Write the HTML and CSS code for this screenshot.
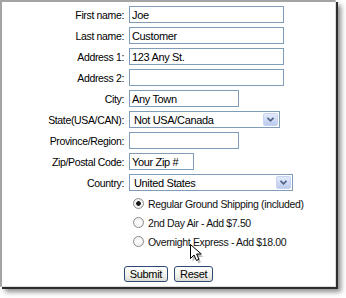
FILE: index.html
```html
<html>
<head>
  <meta charset="UTF-8">
  <title>Shipping Address</title>
  <link rel="stylesheet" href="styles.css">
</head>
<body>
  <form class="panel">
    <div class="fields">
      <label for="first">First name:</label>
      <input id="first" class="w-long" type="text" value="Joe">

      <label for="last">Last name:</label>
      <input id="last" class="w-long" type="text" value="Customer">

      <label for="addr1">Address 1:</label>
      <input id="addr1" class="w-long" type="text" value="123 Any St.">

      <label for="addr2">Address 2:</label>
      <input id="addr2" class="w-long" type="text" value="">

      <label for="city">City:</label>
      <input id="city" class="w-mid" type="text" value="Any Town">

      <label for="state">State(USA/CAN):</label>
      <span class="select w-state">
        <select id="state"><option>Not USA/Canada</option></select>
        <span class="drop"><svg width="7" height="5" viewBox="0 0 7 5"><path d="M0.5 0.8 L3.5 3.8 L6.5 0.8" fill="none" stroke="#4d6185" stroke-width="1.6"/></svg></span>
      </span>

      <label for="region">Province/Region:</label>
      <input id="region" class="w-mid" type="text" value="">

      <label for="zip">Zip/Postal Code:</label>
      <input id="zip" class="w-short" type="text" value="Your Zip #">

      <label for="country">Country:</label>
      <span class="select w-country">
        <select id="country"><option>United States</option></select>
        <span class="drop"><svg width="7" height="5" viewBox="0 0 7 5"><path d="M0.5 0.8 L3.5 3.8 L6.5 0.8" fill="none" stroke="#4d6185" stroke-width="1.6"/></svg></span>
      </span>

      <div class="shipping">
        <label class="radio"><input type="radio" name="ship" checked> Regular Ground Shipping (included)</label>
        <label class="radio"><input type="radio" name="ship"> 2nd Day Air - Add $7.50</label>
        <label class="radio"><input type="radio" name="ship"> Overnight Express - Add $18.00</label>
      </div>
    </div>

    <div class="actions">
      <button type="button">Submit</button>
      <button type="button">Reset</button>
    </div>

    <svg class="cursor" width="16" height="22" viewBox="0 0 16 22">
      <path d="M2.5 3.5 L2.5 17.5 L6 14 L8.5 19.5 L11 18.3 L8.6 13 L13.3 13 Z" fill="rgba(0,0,0,0.25)"/>
      <path d="M0.5 0.5 L0.5 14.5 L4 11 L6.5 16.5 L9 15.3 L6.6 10 L11.3 10 Z" fill="#fff" stroke="#000" stroke-width="1" stroke-linejoin="miter"/>
    </svg>
  </form>
</body>
</html>
```

FILE: styles.css
```css
body {
  margin: 0px;
  background: #ffffff;
  font-family: "Liberation Sans", Arial, sans-serif;
  font-size: 10.5px;
  letter-spacing: -0.35px;
  color: #000000;
}

.panel {
  position: relative;
  box-sizing: border-box;
  width: 336px;
  height: 287px;
  margin: 0px;
  background: #ffffff;
  border-left: 2px solid #a4a4a4;
  border-top: 2px solid #a4a4a4;
  border-right: 1px solid #dcdcdc;
  border-bottom: 1px solid #dcdcdc;
  box-shadow: 2px 2px 0px #2e2e2e, 5px 5px 5px rgba(0, 0, 0, 0.45);
}

.fields {
  display: grid;
  grid-template-columns: 122px auto;
  column-gap: 5px;
  row-gap: 4px;
  padding-top: 4px;
  align-items: center;
}

.fields > label {
  text-align: right;
  white-space: nowrap;
}

input[type="text"] {
  box-sizing: border-box;
  height: 17px;
  margin: 0px;
  padding: 0px 2px;
  border: 1px solid #7f9db9;
  font-family: "Liberation Sans", Arial, sans-serif;
  font-size: 11px;
  letter-spacing: -0.35px;
  color: #000000;
  outline: none;
}

.w-long { width: 155px; }
.w-mid { width: 110px; }
.w-short { width: 65px; }
.w-state { width: 151px; }
.w-country { width: 164px; }

.select {
  box-sizing: border-box;
  display: flex;
  height: 17px;
  border: 1px solid #7f9db9;
  padding: 1px;
  background: #ffffff;
}

.select select {
  flex: 1;
  min-width: 0px;
  -webkit-appearance: none;
  appearance: none;
  border: none;
  margin: 0px;
  padding: 0px 0px 0px 3px;
  background: #ffffff;
  font-family: "Liberation Sans", Arial, sans-serif;
  font-size: 11px;
  letter-spacing: -0.35px;
  color: #000000;
  outline: none;
}

.drop {
  box-sizing: border-box;
  width: 15px;
  display: flex;
  align-items: center;
  justify-content: center;
  border: 1px solid #c6d3f1;
  border-radius: 2px;
  background: linear-gradient(#e3ebfb, #bccbee);
}

.shipping {
  grid-column: 2;
  margin-top: -1px;
  padding-left: 4px;
}

.radio {
  display: flex;
  align-items: center;
  height: 19px;
  white-space: nowrap;
  color: #111111;
}

.radio input {
  -webkit-appearance: none;
  appearance: none;
  box-sizing: border-box;
  width: 11px;
  height: 11px;
  margin: 0px 4px 0px 0px;
  border: 1px solid #8b8b8b;
  border-radius: 50%;
  background: radial-gradient(circle, #ffffff 0%, #ececec 100%);
}

.radio input:checked {
  background: radial-gradient(circle, #1a1a1a 0px, #1a1a1a 2px, #f4f4f4 2.6px, #ececec 100%);
}

.actions {
  display: flex;
  justify-content: center;
  gap: 6px;
  margin-top: 15px;
}

button {
  box-sizing: border-box;
  height: 16px;
  padding: 0px 5px;
  margin: 0px;
  border: 1px solid #2d4a74;
  border-radius: 3px;
  background: linear-gradient(#ffffff, #f0f0ea 60%, #dcdcd4);
  font-family: "Liberation Sans", Arial, sans-serif;
  font-size: 11px;
  letter-spacing: -0.3px;
  color: #000000;
}

.cursor {
  position: absolute;
  left: 188px;
  top: 242px;
}
```
